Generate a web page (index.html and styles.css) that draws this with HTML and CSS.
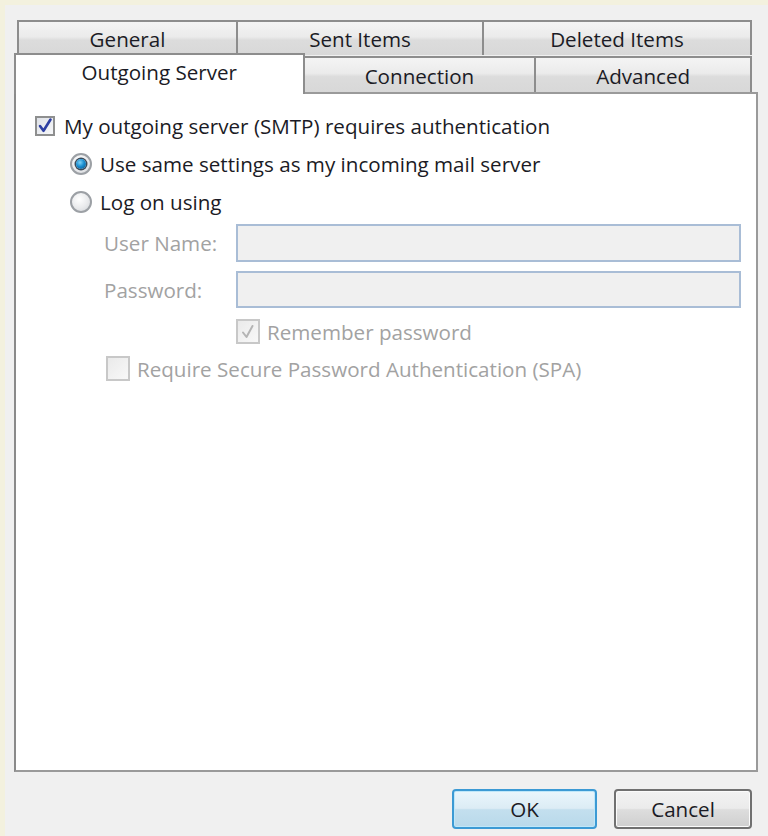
FILE: index.html
```html
<!DOCTYPE html>
<html>
<head>
<meta charset="utf-8">
<link rel="stylesheet" href="styles.css">
</head>
<body>
<div class="dialog">
  <div class="tabs-back">
    <div class="tab t-general">General</div>
    <div class="tab t-sent">Sent Items</div>
    <div class="tab t-deleted">Deleted Items</div>
  </div>
  <div class="tabs-front">
    <div class="tab tab-active">Outgoing Server</div>
    <div class="tab t-conn">Connection</div>
    <div class="tab t-adv">Advanced</div>
  </div>
  <div class="panel">
    <div class="row row-auth">
      <span class="check checked">
        <svg viewBox="0 0 20 20" width="20" height="20"><path d="M5 10 L8.5 14.8 L15.5 3.5" fill="none" stroke="#2d3fa3" stroke-width="2.6" stroke-linejoin="round" stroke-linecap="round"/></svg>
      </span>
      <span class="label">My outgoing server (SMTP) requires authentication</span>
    </div>
    <div class="row row-radio1">
      <span class="radio on"><span class="dot"></span></span>
      <span class="label">Use same settings as my incoming mail server</span>
    </div>
    <div class="row row-radio2">
      <span class="radio"></span>
      <span class="label">Log on using</span>
    </div>
    <div class="row row-field row-user">
      <span class="label dim field-label">User Name:</span>
      <span class="input"></span>
    </div>
    <div class="row row-field row-pass">
      <span class="label dim field-label">Password:</span>
      <span class="input"></span>
    </div>
    <div class="row row-remember">
      <span class="check disabled">
        <svg viewBox="0 0 22 22" width="22" height="22"><path d="M6 11.5 L9.5 16 L15.5 5" fill="none" stroke="#b4b4b4" stroke-width="2" stroke-linejoin="round" stroke-linecap="round"/></svg>
      </span>
      <span class="label dim">Remember password</span>
    </div>
    <div class="row row-spa">
      <span class="check disabled"></span>
      <span class="label dim">Require Secure Password Authentication (SPA)</span>
    </div>
  </div>
  <div class="buttons">
    <div class="btn btn-ok">OK</div>
    <div class="btn btn-cancel">Cancel</div>
  </div>
</div>
</body>
</html>
```

FILE: styles.css
```css
html, body {
  margin: 0;
  padding: 0;
  background: #f3f1de;
  width: 768px;
  height: 836px;
  overflow: hidden;
}

.dialog {
  margin: 5px 0 0 5px;
  width: 763px;
  height: 831px;
  background: #f0f0f0;
  box-sizing: border-box;
  padding-top: 15px;
  font-family: "Open Sans", "Noto Sans", sans-serif;
  font-size: 20.6px;
  color: #1b1b25;
}

.tabs-back {
  display: flex;
  margin-left: 12px;
  width: 735px;
  height: 35px;
}

.tab {
  box-sizing: border-box;
  border: 2px solid #8d8d8d;
  border-bottom: none;
  background: linear-gradient(#f4f4f4 0%, #ebebeb 45%, #dcdcdc 55%, #d8d8d8 100%);
  display: flex;
  align-items: center;
  justify-content: center;
  color: #1b1b25;
  white-space: nowrap;
}

.tabs-back .tab { height: 35px; padding-top: 1px; }
.t-general { width: 221px; }
.t-sent { width: 248px; margin-left: -2px; }
.t-deleted { width: 270px; margin-left: -2px; }

.tabs-front {
  display: flex;
  align-items: flex-end;
  margin-left: 9px;
  margin-top: -2px;
  height: 39px;
  width: 738px;
}

.tab-active {
  width: 291px;
  height: 41px;
  margin-bottom: -2px;
  background: #ffffff;
  position: relative;
  z-index: 2;
  padding-bottom: 6px;
}

.t-conn { width: 234px; height: 36px; margin-left: -2px; padding-top: 2px; }
.t-adv { width: 218px; height: 36px; margin-left: -2px; padding-top: 2px; }

.panel {
  margin-left: 9px;
  width: 744px;
  height: 680px;
  box-sizing: border-box;
  background: #ffffff;
  border: 2px solid #9a9a9a;
  border-left-color: #8a8a8a;
  padding-top: 22px;
  position: relative;
  z-index: 1;
}

.row {
  display: flex;
  align-items: center;
}

.label { white-space: nowrap; }
.dim { color: #a2a2a2; }

.row-auth { padding-left: 19px; height: 20px; }
.row-auth .label { margin-left: 9px; }

.check {
  box-sizing: border-box;
  display: inline-flex;
  flex: none;
  align-items: center;
  justify-content: center;
}

.check.checked {
  width: 20px;
  height: 20px;
  border: 2px solid #8e8f8f;
  background: linear-gradient(135deg, #dfe2e8, #f6f7f9);
}
.check.checked svg { margin: -2px; }

.check.disabled {
  width: 24px;
  height: 25px;
  border: 2px solid #c8c8c8;
  background: linear-gradient(135deg, #eaeaea, #f8f8f8);
}
.check.disabled svg { margin: -2px; }

.radio {
  box-sizing: border-box;
  width: 22px;
  height: 22px;
  flex: none;
  border-radius: 50%;
  border: 2px solid #9ca0a5;
  background: radial-gradient(circle at 40% 35%, #ffffff 0%, #e9eaec 55%, #cfd2d6 100%);
  display: inline-flex;
  align-items: center;
  justify-content: center;
}
.radio.on .dot {
  width: 10px;
  height: 10px;
  border-radius: 50%;
  background: radial-gradient(circle at 40% 35%, #7fd2f7 0%, #1a8ed0 45%, #0b4f86 100%);
  box-shadow: 0 0 0 1.5px #3a4a5a;
}

.row-radio1 { margin-top: 17px; padding-left: 54px; height: 22px; }
.row-radio2 { margin-top: 16px; padding-left: 54px; height: 22px; }
.row-radio1 .label, .row-radio2 .label { margin-left: 8px; }

.row-field { padding-left: 88px; }
.field-label { width: 132px; }
.row-user { margin-top: 11px; height: 38px; }
.row-pass { margin-top: 9px; height: 37px; }

.input {
  box-sizing: border-box;
  width: 505px;
  height: 100%;
  background: #f0f0f0;
  border: 2px solid #a9bdd6;
}

.row-remember { margin-top: 11px; padding-left: 220px; height: 25px; }
.row-remember .label { margin-left: 7px; }

.row-spa { margin-top: 12px; padding-left: 90px; height: 25px; }
.row-spa .label { margin-left: 7px; }

.buttons {
  display: flex;
  justify-content: flex-end;
  gap: 17px;
  margin-top: 17px;
  width: 747px;
}

.btn {
  box-sizing: border-box;
  height: 40px;
  border-radius: 4px;
  display: flex;
  align-items: center;
  justify-content: center;
  color: #1b1b25;
}

.btn-ok {
  width: 145px;
  border: 2px solid #3c9ad4;
  background: linear-gradient(#eaf6fc 0%, #dcecf5 48%, #c3dfee 52%, #b9d9ea 100%);
  box-shadow: inset 0 0 0 1px #bfe7f9;
}

.btn-cancel {
  width: 138px;
  border: 2px solid #707070;
  background: linear-gradient(#f2f2f2 0%, #ebebeb 48%, #dddddd 52%, #cfcfcf 100%);
  box-shadow: inset 0 0 0 1px #fbfbfb;
}
```
